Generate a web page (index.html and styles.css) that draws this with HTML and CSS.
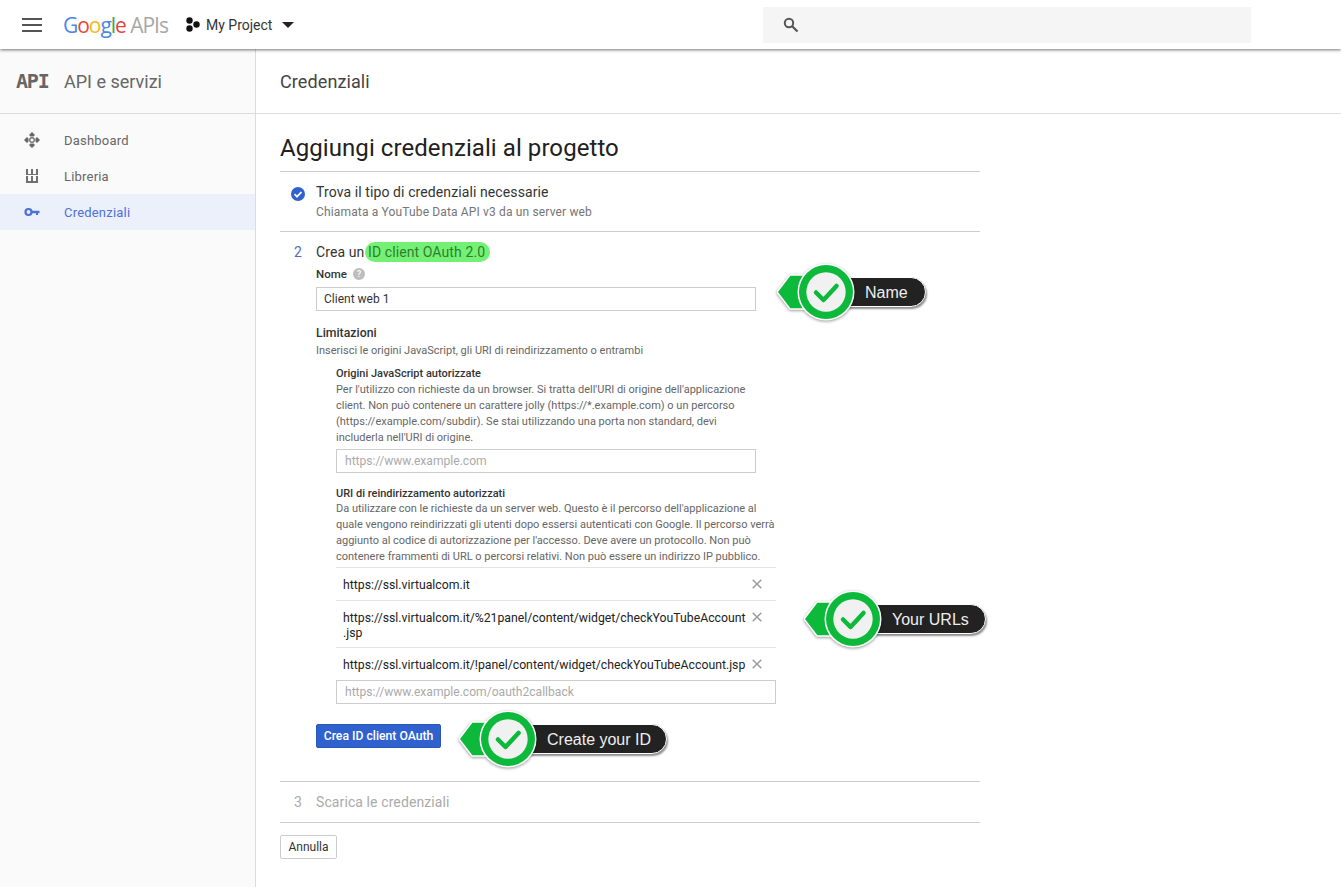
FILE: index.html
```html
<!DOCTYPE html>
<html lang="it">
<head>
<meta charset="utf-8">
<title>Credenziali</title>
<link rel="stylesheet" href="styles.css">
</head>
<body>
<header class="topbar">
  <svg class="menu-icon" width="20" height="14" viewBox="0 0 20 14"><path d="M0 1h20M0 7h20M0 13h20" stroke="#555" stroke-width="2"/></svg>
  <div class="logo"><span class="g-b">G</span><span class="g-r">o</span><span class="g-y">o</span><span class="g-b">g</span><span class="g-g">l</span><span class="g-r">e</span> <span class="logo-apis">APIs</span></div>
  <svg class="project-icon" width="14" height="15" viewBox="0 0 14 15"><circle cx="3.5" cy="3.5" r="3.2" fill="#111"/><circle cx="3.5" cy="11.5" r="3.2" fill="#111"/><circle cx="10.5" cy="7.5" r="3.2" fill="#111"/></svg>
  <span class="project-name">My Project</span>
  <svg class="caret" width="12" height="6" viewBox="0 0 12 6"><path d="M0 0h12L6 6z" fill="#222"/></svg>
  <div class="search">
    <svg width="16" height="16" viewBox="0 0 16 16"><circle cx="6" cy="6" r="4.2" fill="none" stroke="#555" stroke-width="2"/><path d="M9.2 9.2L14.5 14.5" stroke="#555" stroke-width="2.2"/></svg>
  </div>
</header>
<div class="layout">
  <aside class="sidebar">
    <div class="side-head">
      <span class="api-mark">API</span>
      <span class="side-title">API e servizi</span>
    </div>
    <nav class="side-nav">
      <a class="nav-item">
        <svg width="16" height="16" viewBox="0 0 16 16"><path d="M8 0l3 3-1.500 1.500h-3L5 3zM8 16l-3-3 1.500-1.500h3L11 13zM0 8l3-3 1.500 1.500v3L3 11zM16 8l-3 3-1.500-1.500v-3L13 5z" fill="#666"/><circle cx="8" cy="8" r="2.300" fill="none" stroke="#777" stroke-width="1.400"/></svg>
        <span>Dashboard</span>
      </a>
      <a class="nav-item">
        <svg width="16" height="16" viewBox="0 0 16 16" fill="#707070"><path d="M2 1h2v5H2zM7 1h2v5H7zM12 1h2v5h-2zM2 6h12v1H2zM2 8h2v5H2zM7 8h2v5H7zM12 8h2v5h-2zM2 13h12v2H2z"/></svg>
        <span>Libreria</span>
      </a>
      <a class="nav-item active">
        <svg width="16" height="16" viewBox="0 0 16 16"><circle cx="4.500" cy="8" r="3" fill="none" stroke="#4d70d9" stroke-width="2.200"/><path d="M7.500 6.800h8v2.400h-1.500v1.800h-2V9.200H7.500z" fill="#4d70d9"/></svg>
        <span>Credenziali</span>
      </a>
    </nav>
  </aside>
  <main class="main">
    <div class="page-head">Credenziali</div>
    <div class="content">
      <h1 class="page-title">Aggiungi credenziali al progetto</h1>
      <section class="step step-done">
        <svg class="step-check" width="14" height="14" viewBox="0 0 14 14"><circle cx="7" cy="7" r="7" fill="#2f62cf"/><path d="M3.500 7.200l2.500 2.500 4.500-4.700" fill="none" stroke="#fff" stroke-width="1.800"/></svg>
        <div>
          <div class="step-title">Trova il tipo di credenziali necessarie</div>
          <div class="step-sub">Chiamata a YouTube Data API v3 da un server web</div>
        </div>
      </section>
      <section class="step step-form">
        <span class="step-num">2</span>
        <div class="step-body">
          <div class="step-title">Crea un <mark class="marker">ID client OAuth 2.0</mark></div>
          <label class="field-label name-label">Nome <span class="help">?</span></label>
          <div class="input filled">Client web 1</div>
          <div class="field-label limit-label">Limitazioni</div>
          <p class="hint">Inserisci le origini JavaScript, gli URI di reindirizzamento o entrambi</p>
          <div class="nested">
            <div class="field-label">Origini JavaScript autorizzate</div>
            <p class="hint narrow">Per l'utilizzo con richieste da un browser. Si tratta dell'URI di origine dell'applicazione client. Non può contenere un carattere jolly (https://*.example.com) o un percorso (https://example.com/subdir). Se stai utilizzando una porta non standard, devi includerla nell'URI di origine.</p>
            <div class="input placeholder origin-input">https://www.example.com</div>
            <div class="field-label uri-label">URI di reindirizzamento autorizzati</div>
            <p class="hint wide">Da utilizzare con le richieste da un server web. Questo è il percorso dell'applicazione al quale vengono reindirizzati gli utenti dopo essersi autenticati con Google. Il percorso verrà aggiunto al codice di autorizzazione per l'accesso. Deve avere un protocollo. Non può contenere frammenti di URL o percorsi relativi. Non può essere un indirizzo IP pubblico.</p>
            <ul class="uri-list">
              <li class="uri-row"><span class="uri-text">https://ssl.virtualcom.it</span><svg class="uri-x" width="10" height="10" viewBox="0 0 10 10"><path d="M.7.7l8.600 8.600M9.300.7L.7 9.300" stroke="#999" stroke-width="1.400"/></svg></li>
              <li class="uri-row uri-row-double"><span class="uri-text">https://ssl.virtualcom.it/%21panel/content/widget/checkYouTubeAccount<br>.jsp</span><svg class="uri-x" width="10" height="10" viewBox="0 0 10 10"><path d="M.7.7l8.600 8.600M9.300.7L.7 9.300" stroke="#999" stroke-width="1.400"/></svg></li>
              <li class="uri-row"><span class="uri-text">https://ssl.virtualcom.it/!panel/content/widget/checkYouTubeAccount.jsp</span><svg class="uri-x" width="10" height="10" viewBox="0 0 10 10"><path d="M.7.7l8.600 8.600M9.300.7L.7 9.300" stroke="#999" stroke-width="1.400"/></svg></li>
            </ul>
            <div class="input placeholder uri-input">https://www.example.com/oauth2callback</div>
          </div>
          <button class="btn-primary">Crea ID client OAuth</button>
        </div>
      </section>
      <section class="step step-last">
        <span class="step-num muted">3</span>
        <div class="step-title muted">Scarica le credenziali</div>
      </section>
      <button class="btn-cancel">Annulla</button>
    </div>
  </main>
</div>

<div class="callout callout-name">
  <svg class="callout-mark" width="80" height="60" viewBox="0 0 80 60"><use href="#badge"/></svg>
  <span class="callout-label">Name</span>
</div>
<div class="callout callout-urls">
  <svg class="callout-mark" width="80" height="60" viewBox="0 0 80 60"><use href="#badge"/></svg>
  <span class="callout-label">Your URLs</span>
</div>
<div class="callout callout-id">
  <svg class="callout-mark" width="80" height="60" viewBox="0 0 80 60"><use href="#badge"/></svg>
  <span class="callout-label">Create your ID</span>
</div>

<svg class="defs" width="0" height="0">
  <defs>
    <g id="badge">
      <path d="M0 30 L13 13 H40 V47 H13 Z" fill="#0cb93a" stroke="#fff" stroke-width="1.500"/>
      <circle cx="49" cy="30" r="28.500" fill="#fff"/>
      <circle cx="49" cy="30" r="27" fill="#0cb93a"/>
      <circle cx="49" cy="30" r="19.700" fill="#f1f1f1"/>
      <path d="M39 30.500l7.500 7.500 13-14" fill="none" stroke="#0cb93a" stroke-width="4.500" stroke-linecap="round" stroke-linejoin="round"/>
    </g>
  </defs>
</svg>
</body>
</html>
```
FILE: styles.css
```css
* { box-sizing: border-box; }
html, body { margin: 0; padding: 0; }
body {
  width: 1341px;
  height: 887px;
  overflow: hidden;
  background: #fff;
  font-family: Roboto, "Liberation Sans", sans-serif;
  color: #212121;
  position: relative;
}

.topbar {
  height: 49px;
  display: flex;
  align-items: center;
  background: #fff;
  box-shadow: 0 1px 3px rgba(0,0,0,.55);
  position: relative;
  z-index: 2;
  padding-left: 22px;
}
.menu-icon { flex: none; }
.logo {
  margin-left: 21px;
  font-family: "Open Sans", Roboto, sans-serif;
  font-size: 21px;
  letter-spacing: -1.050px;
  white-space: nowrap;
  width: 122px;
  font-weight: 500;
}
.g-b { color: #4a86e8; }
.g-r { color: #e8453c; }
.g-y { color: #f5b90f; }
.g-g { color: #34a853; }
.logo-apis { color: #a8a8a8; font-weight: 400; letter-spacing: -1px; }
.project-icon { flex: none; margin-left: 1px; }
.project-name { margin-left: 6px; font-size: 14px; color: #333; width: 76px; white-space: nowrap; }
.caret { flex: none; }
.search {
  margin-left: 469px;
  width: 488px;
  height: 36px;
  background: #f5f5f5;
  display: flex;
  align-items: center;
  padding-left: 20px;
}

.layout { display: flex; height: 838px; }
.sidebar {
  width: 256px;
  flex: none;
  background: #fafafa;
  border-right: 1px solid #dcdcdc;
}
.side-head {
  height: 65px;
  border-bottom: 1px solid #dcdcdc;
  display: flex;
  align-items: center;
  padding-left: 16px;
}
.api-mark {
  width: 48px;
  font-family: "DejaVu Sans Mono", monospace;
  font-size: 20px;
  font-weight: 700;
  color: #666;
  letter-spacing: -1.200px;
}
.side-title { font-size: 18px; color: #666; }
.side-nav { display: flex; flex-direction: column; padding-top: 8px; }
.nav-item {
  height: 36px;
  display: flex;
  align-items: center;
  gap: 24px;
  padding-left: 24px;
  font-size: 13px;
  letter-spacing: .2px;
  color: #666;
}
.nav-item.active { background: #ebf0fa; color: #4d70d9; }

.main { flex: 1; min-width: 0; }
.page-head {
  height: 65px;
  border-bottom: 1px solid #dcdcdc;
  display: flex;
  align-items: center;
  padding-left: 24px;
  font-size: 18px;
  letter-spacing: .1px;
  color: #444;
}
.content { width: 724px; padding-left: 24px; }
.page-title {
  margin: 0;
  height: 58px;
  padding-top: 18px;
  font-size: 24px;
  line-height: 32px;
  font-weight: 400;
  letter-spacing: .07px;
  color: #212121;
  border-bottom: 1px solid #ccc;
}
.step { display: flex; border-bottom: 1px solid #ccc; }
.step-done { height: 60px; padding-top: 12px; }
.step-check { flex: none; margin: 3px 11px 0 11px; }
.step-title { font-size: 14px; line-height: 16px; color: #333; letter-spacing: .1px; }
.step-sub { font-size: 12px; line-height: 14px; margin-top: 5px; color: #757575; letter-spacing: .15px; }
.step-form { height: 550px; padding-top: 12px; }
.step-num { width: 36px; flex: none; padding-left: 14px; font-size: 14px; line-height: 16px; color: #4d70b9; }
.step-body { flex: 1; min-width: 0; }
.marker {
  background: #74f174;
  color: #2e7d32;
  border-radius: 10px;
  padding: 2px 5px 2px 3px;
  margin-left: -3px;
}
.field-label { font-size: 11px; line-height: 14px; font-weight: 500; color: #333; }
.name-label { display: flex; align-items: center; gap: 6px; margin-top: 7px; height: 14px; font-size: 11.500px; }
.help {
  width: 12px; height: 12px;
  border-radius: 50%;
  background: #bdbdbd;
  color: #fff;
  font-size: 9px;
  text-align: center;
  line-height: 12px;
}
.input {
  width: 440px;
  height: 24px;
  border: 1px solid #ccc;
  background: #fff;
  font-size: 12px;
  line-height: 22px;
  padding-left: 7px;
}
.filled { margin-top: 6px; color: #333; }
.placeholder { color: #aaa; padding-left: 8px; font-size: 12.100px; }
.limit-label { margin-top: 15px; font-size: 12.300px; }
.hint { margin: 3px 0 0; font-size: 11px; line-height: 16px; color: #666; }
.nested { padding-left: 20px; margin-top: 8px; }
.nested .hint { margin-top: 1px; }
.narrow { width: 420px; }
.wide { width: 440px; }
.origin-input { margin-top: 3px; width: 420px; }
.uri-label { margin-top: 14px; }
.nested .wide { margin-top: 0; }
.uri-list { list-style: none; margin: 2px 0 0; padding: 0; width: 440px; }
.uri-row {
  display: flex;
  justify-content: space-between;
  border-top: 1px solid #e4e4e4;
  padding: 10px 14px 7px 7px;
  font-size: 12.250px;
  line-height: 15px;
  color: #222;
  white-space: nowrap;
}
.uri-row-double { padding-bottom: 6px; }
.uri-x { flex: none; margin-top: 1px; }
.uri-input { margin-top: 0; }
.btn-primary {
  display: block;
  margin-top: 20px;
  width: 125px;
  height: 24px;
  padding: 0;
  background: #2f62cf;
  border: 1px solid #2a58ba;
  border-radius: 2px;
  color: #fff;
  font-family: inherit;
  font-size: 12.200px;
  font-weight: 500;
}
.step-last { height: 41px; padding-top: 12px; }
.muted { color: #aaa; }
.btn-cancel {
  display: block;
  margin-top: 12px;
  width: 57px;
  height: 24px;
  padding: 0;
  background: #fff;
  border: 1px solid #ccc;
  border-radius: 2px;
  font-family: inherit;
  font-size: 12px;
  color: #333;
}

.callout {
  position: absolute;
  z-index: 3;
  display: flex;
  align-items: center;
  height: 60px;
}
.callout-mark { position: relative; z-index: 1; flex: none; filter: drop-shadow(0 1.500px 1.500px rgba(0,0,0,.4)); }
.callout-label {
  height: 30px;
  margin-left: -30px;
  padding-left: 37px;
  padding-right: 16px;
  background: #222;
  border: 1px solid #fff;
  border-radius: 0 16px 16px 0;
  box-shadow: 1px 2px 2px rgba(0,0,0,.45);
  color: #eee;
  font-family: "Liberation Sans", sans-serif;
  font-size: 16px;
  line-height: 29px;
  white-space: nowrap;
}
.callout-name { left: 777px; top: 262px; }
.callout-name .callout-label { width: 99px; }
.callout-urls { left: 804px; top: 589px; }
.callout-urls .callout-label { width: 132px; }
.callout-id { left: 459px; top: 709px; }
.callout-id .callout-label { width: 158px; }
.defs { position: absolute; }
```
